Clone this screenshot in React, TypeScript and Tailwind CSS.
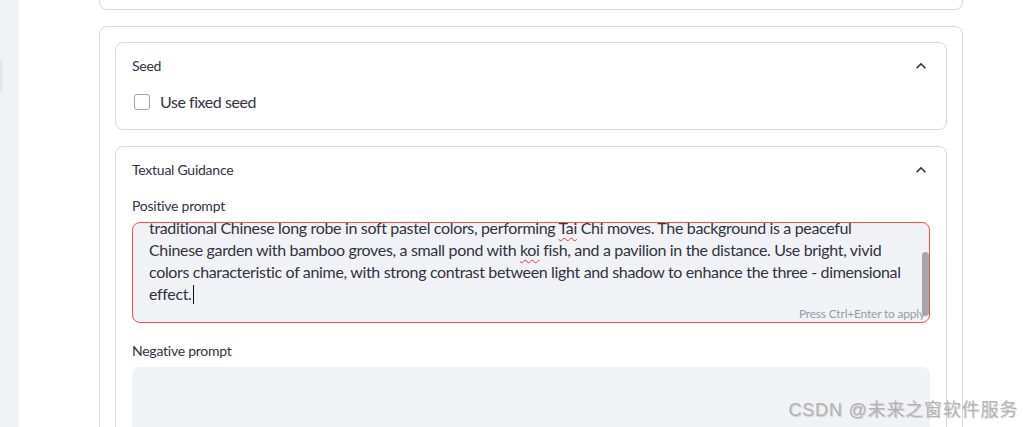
const promptLines = [
  'traditional Chinese long robe in soft pastel colors, performing ',
  'Chinese garden with bamboo groves, a small pond with ',
  'colors characteristic of anime, with strong contrast between light and shadow to enhance the three - dimensional',
]

function ExpandLess() {
  return (
    <svg viewBox="0 0 24 24" className="h-5 w-5 fill-[#31333f]" aria-hidden>
      <path d="M7.41 15.41 12 10.83l4.59 4.58L18 14l-6-6-6 6z" />
    </svg>
  )
}

function Squiggle({ children }: { children: string }) {
  return (
    <span className="underline decoration-wavy decoration-[#e23b3b] decoration-1 underline-offset-[3px]">
      {children}
    </span>
  )
}

function Expander({ title, children }: { title: string; children: React.ReactNode }) {
  return (
    <div className="shrink-0 rounded-lg border border-[#d9d9dc]">
      <div className="flex h-[47px] items-center justify-between pb-[2px] pl-4 pr-[15px] text-[14px] tracking-[-0.25px] text-[#31333f]">
        <span>{title}</span>
        <ExpandLess />
      </div>
      {children}
    </div>
  )
}

export default function App() {
  return (
    <div
      className="relative flex h-[427px] w-[1023px] overflow-hidden bg-white"
      style={{ fontFamily: '"Source Sans Pro", Lato, "Noto Sans", sans-serif' }}
    >
      <aside className="relative h-full w-[19px] shrink-0 bg-[#f0f2f6]">
        <div className="mt-[60px] h-[32px] w-[3px] rounded-r bg-[#e4e6eb]" />
      </aside>

      <main className="ml-[80px] flex w-[864px] shrink-0 flex-col gap-4">
        <div className="h-[10px] shrink-0 rounded-b-lg border border-t-0 border-[#d9d9dc]" />

        <section className="flex shrink-0 flex-col gap-4 rounded-lg border border-[#d9d9dc] p-[15px]">
          <Expander title="Seed">
            <div className="flex h-[39px] items-start pl-[18px]">
              <label className="flex h-[24px] items-center gap-[10px] text-[16px] tracking-[-0.45px] text-[#31333f]">
                <span className="h-4 w-4 rounded-[3px] border border-[#a3a5ad] bg-white" />
                <span>Use fixed seed</span>
              </label>
            </div>
          </Expander>

          <Expander title="Textual Guidance">
            <div className="px-4 pb-4">
              <div className="flex h-[28px] items-center pb-[6px] text-[14px] tracking-[-0.25px] text-[#31333f]">
                Positive prompt
              </div>
              <div className="relative h-[101px] overflow-hidden rounded-lg border border-[#ff4b4b] bg-[#f0f2f6] pl-4 pr-6 text-[16px] leading-[22px] tracking-[-0.34px] text-[#31333f]">
                <div className="-mt-[6px] whitespace-nowrap">
                  {promptLines[0]}
                  <Squiggle>Tai</Squiggle> Chi moves. The background is a peaceful
                </div>
                <div className="whitespace-nowrap">
                  {promptLines[1]}
                  <Squiggle>koi</Squiggle> fish, and a pavilion in the distance. Use bright, vivid
                </div>
                <div className="whitespace-nowrap">{promptLines[2]}</div>
                <div className="flex items-center whitespace-nowrap">
                  effect.
                  <span className="ml-px inline-block h-[19px] w-px bg-[#111]" />
                </div>
                <div className="absolute right-0 top-[29px] h-[64px] w-[7px] rounded-full bg-[#a6a6ab]" />
                <div className="absolute bottom-0 right-[4px] text-[12px] leading-[16px] tracking-[-0.2px] text-[#9a9ca4]">
                  Press Ctrl+Enter to apply
                </div>
              </div>

              <div className="mt-4 flex h-[28px] items-center pb-[6px] text-[14px] tracking-[-0.25px] text-[#31333f]">
                Negative prompt
              </div>
              <div className="h-[101px] rounded-lg bg-[#f0f2f6]" />
            </div>
          </Expander>
        </section>
      </main>

      <div
        className="absolute bottom-[3px] right-[5px] text-[18px] tracking-[0.8px] text-[#b3b3b3] [text-shadow:1px_1px_1px_rgba(0,0,0,0.15)]"
        style={{ fontFamily: '"Liberation Sans", "Noto Sans CJK SC", sans-serif' }}
      >
        CSDN @未来之窗软件服务
      </div>
    </div>
  )
}
